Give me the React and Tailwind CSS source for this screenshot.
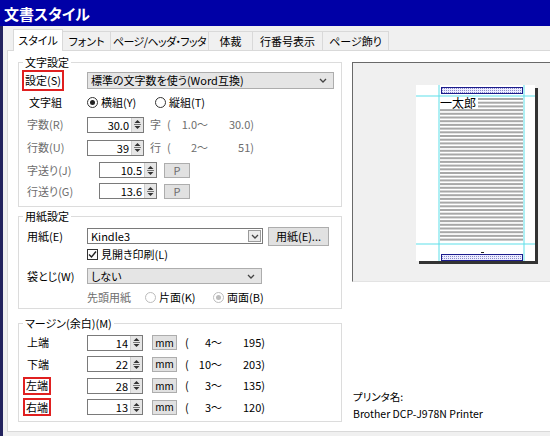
import React from "react";

// 小さな上下矢印（スピンボタン）
const SpinArrows = () => (
  <svg width="7" height="11" viewBox="0 0 7 11">
    <polygon points="3.5,1 6.5,4 0.5,4" fill="#333" />
    <rect x="0" y="5" width="7" height="1" fill="#777" />
    <polygon points="0.5,7 6.5,7 3.5,10" fill="#333" />
  </svg>
);

const Spin = ({ value, w }) => (
  <div className={`${w} h-[16px] flex border border-[#7a7a7a] bg-white`}>
    <div className="flex-1 text-right pr-[2px] leading-[14px]">{value}</div>
    <div className="w-[12px] bg-[#e6e6e6] border-l border-[#cfcfcf] flex items-center justify-center">
      <SpinArrows />
    </div>
  </div>
);

const Chevron = () => (
  <svg width="8" height="5" viewBox="0 0 8 5">
    <polyline points="1,1 4,4 7,1" fill="none" stroke="#444" strokeWidth="1.3" />
  </svg>
);

const Radio = ({ checked, disabled }) => (
  <span
    className={`w-[11px] h-[11px] rounded-full border bg-white flex items-center justify-center ${
      disabled ? "border-[#bcbcbc]" : "border-[#333] border-[1.5px]"
    }`}
  >
    {checked && (
      <span
        className={`w-[5px] h-[5px] rounded-full ${
          disabled ? "bg-[#bcbcbc]" : "bg-[#222]"
        }`}
      />
    )}
  </span>
);

const GrayBtn = ({ children, w, h }) => (
  <div
    className={`${w} ${h} bg-[#e1e1e1] border border-[#adadad] flex items-center justify-center leading-none`}
  >
    {children}
  </div>
);

const tabs = [
  { name: "スタイル", w: "w-[50px]", active: true },
  { name: "フォント", w: "w-[48px]" },
  { name: "ページ/ヘッダ・フッタ", w: "w-[98px]", tight: true },
  { name: "体裁", w: "w-[44px]" },
  { name: "行番号表示", w: "w-[70px]" },
  { name: "ページ飾り", w: "w-[66px]" },
];

const margins = [
  { label: "上端", value: "14", min: "4〜", max: "195)", h: "h-[21px]" },
  { label: "下端", value: "22", min: "10〜", max: "203)", h: "h-[22px]" },
  { label: "左端", value: "28", min: "3〜", max: "135)", h: "h-[21px]", red: true },
  { label: "右端", value: "13", min: "3〜", max: "120)", h: "h-[22px]", red: true },
];

// プレビューのページ
const PagePreview = () => {
  const lines = Array.from({ length: 39 }, (_, i) => 14 + i * 3.7);
  return (
    <svg width="126" height="182" viewBox="0 0 126 182">
      <defs>
        <pattern id="dots" width="2" height="2" patternUnits="userSpaceOnUse">
          <rect width="2" height="2" fill="#ececff" />
          <rect width="1" height="1" fill="#8a8ac8" />
        </pattern>
      </defs>
      <rect x="2" y="1" width="119" height="176" fill="#fff" />
      <rect x="121" y="4" width="3" height="176" fill="#333" />
      <rect x="5" y="177" width="119" height="3" fill="#333" />
      {lines.map((y, i) => (
        <rect
          key={i}
          x={y < 24 ? 64 : 26}
          y={y}
          width={y < 24 ? 45 : 83}
          height="2"
          fill="#a8a8a8"
        />
      ))}
      <text x="26" y="24" fontSize="12" fill="#000" fontFamily="Noto Sans CJK JP">
        一太郎
      </text>
      <rect x="2" y="11.5" width="119" height="1" fill="#5fe0ea" />
      <rect x="2" y="159.5" width="119" height="1" fill="#5fe0ea" />
      <rect x="24.5" y="1" width="1" height="176" fill="#5fe0ea" />
      <rect x="109.5" y="1" width="1" height="176" fill="#5fe0ea" />
      <rect x="27.5" y="3.5" width="81" height="6" fill="url(#dots)" stroke="#1c1c8c" strokeWidth="1" />
      <rect x="27.5" y="170.5" width="81" height="6" fill="url(#dots)" stroke="#1c1c8c" strokeWidth="1" />
      <rect x="67" y="168" width="3" height="1" fill="#222" />
    </svg>
  );
};

const App = () => {
  return (
    <div className="w-[550px] h-[436px] overflow-hidden bg-[#f0f0f0] font-['Noto_Sans_CJK_JP',sans-serif] [font-feature-settings:'palt'] text-[11px] text-black">
      <div className="h-[26px] bg-[#0000a6] text-white font-bold text-[15px] pl-[4px] flex items-center leading-none">
        文書スタイル
      </div>
      <div className="h-[410px] border-l-[3px] border-[#23235e] pl-[4px] pt-[3px]">
        {/* タブ */}
        <div className="flex items-end pl-[6px]">
          {tabs.map((t) =>
            t.active ? (
              <div
                key={t.name}
                className={`${t.w} h-[22px] -mb-px relative z-10 bg-white border border-b-0 border-[#d9d9d9] flex items-center justify-center whitespace-nowrap`}
              >
                {t.name}
              </div>
            ) : (
              <div
                key={t.name}
                className={`${t.w} h-[19px] bg-[#f0f0f0] border border-l-0 border-b-0 border-[#d9d9d9] flex items-center justify-center whitespace-nowrap ${
                  t.tight ? "tracking-[-0.6px]" : ""
                }`}
              >
                {t.name}
              </div>
            )
          )}
        </div>

        {/* タブの中身 */}
        <div className="w-[560px] h-[382px] bg-white border border-[#d9d9d9] flex pl-[10px]">
          <div className="w-[324px] flex flex-col pt-[4px]">
            {/* 文字設定 */}
            <fieldset className="border border-[#dcdcdc] pb-[5px]">
              <legend className="ml-[4px] px-[2px] leading-[14px]">文字設定</legend>
              <div className="flex items-center h-[22px] pl-[6px]">
                <div className="w-[62px]">
                  <span className="-ml-[3px] h-[21px] px-[1px] border-2 border-[#e02020] inline-flex items-center">
                    設定(S)
                  </span>
                </div>
                <div className="w-[247px] h-[17px] bg-[#e5e5e5] border border-[#adadad] flex items-center justify-between pl-[3px] pr-[6px]">
                  <span>標準の文字数を使う(Word互換)</span>
                  <Chevron />
                </div>
              </div>
              <div className="flex items-center h-[22px] pl-[6px]">
                <div className="w-[62px] pl-[4px]">文字組</div>
                <div className="w-[68px] flex items-center gap-[3px]">
                  <Radio checked />
                  <span>横組(Y)</span>
                </div>
                <div className="flex items-center gap-[3px]">
                  <Radio />
                  <span>縦組(T)</span>
                </div>
              </div>
              <div className="flex items-center h-[23px] pl-[6px] text-[#6d6d6d]">
                <div className="w-[62px] pl-[2px]">字数(R)</div>
                <div className="text-black">
                  <Spin value="30.0" w="w-[57px]" />
                </div>
                <span className="w-[6px]" />
                <span className="w-[17px]">字</span>
                <span className="w-[14px]">(</span>
                <span className="w-[27px] text-right">1.0〜</span>
                <span className="w-[46px] text-right">30.0)</span>
              </div>
              <div className="flex items-center h-[23px] pl-[6px] text-[#6d6d6d]">
                <div className="w-[62px] pl-[2px]">行数(U)</div>
                <div className="text-black">
                  <Spin value="39" w="w-[57px]" />
                </div>
                <span className="w-[6px]" />
                <span className="w-[17px]">行</span>
                <span className="w-[14px]">(</span>
                <span className="w-[27px] text-right">2〜</span>
                <span className="w-[46px] text-right">51)</span>
              </div>
              <div className="flex items-center h-[22px] pl-[6px] text-[#6d6d6d]">
                <div className="w-[62px] pl-[2px]">字送り(J)</div>
                <div className="ml-[12px] text-black">
                  <Spin value="10.5" w="w-[58px]" />
                </div>
                <div className="ml-[7px]">
                  <GrayBtn w="w-[26px]" h="h-[15px]">P</GrayBtn>
                </div>
              </div>
              <div className="flex items-center h-[20px] pl-[6px] text-[#6d6d6d]">
                <div className="w-[62px] pl-[2px]">行送り(G)</div>
                <div className="ml-[12px] text-black">
                  <Spin value="13.6" w="w-[58px]" />
                </div>
                <div className="ml-[7px]">
                  <GrayBtn w="w-[26px]" h="h-[15px]">P</GrayBtn>
                </div>
              </div>
            </fieldset>

            {/* 用紙設定 */}
            <fieldset className="mt-[2px] border border-[#dcdcdc] pt-[2px] pb-[1px]">
              <legend className="ml-[4px] px-[2px] leading-[14px]">用紙設定</legend>
              <div className="flex items-center h-[22px] pl-[6px]">
                <div className="w-[62px] pl-[2px]">用紙(E)</div>
                <div className="w-[176px] h-[16px] bg-white border border-[#7a7a7a] flex items-center justify-between pl-[3px] pr-[1px]">
                  <span>Kindle3</span>
                  <span className="w-[13px] h-[12px] border border-[#9a9a9a] bg-[#ececec] flex items-center justify-center">
                    <Chevron />
                  </span>
                </div>
                <div className="ml-[5px]">
                  <GrayBtn w="w-[61px]" h="h-[19px]">用紙(E)...</GrayBtn>
                </div>
              </div>
              <div className="flex items-center h-[14px] pl-[68px] gap-[3px]">
                <span className="w-[11px] h-[11px] border border-[#333] bg-white flex items-center justify-center">
                  <svg width="9" height="9" viewBox="0 0 9 9">
                    <polyline points="1,4.5 3.5,7 8,1.5" fill="none" stroke="#222" strokeWidth="1.4" />
                  </svg>
                </span>
                <span>見開き印刷(L)</span>
              </div>
              <div className="flex items-center h-[22px] mt-[4px] pl-[6px]">
                <div className="w-[62px] pl-[2px]">袋とじ(W)</div>
                <div className="w-[175px] h-[16px] bg-[#e5e5e5] border border-[#adadad] flex items-center justify-between pl-[3px] pr-[6px]">
                  <span>しない</span>
                  <Chevron />
                </div>
              </div>
              <div className="flex items-center h-[20px] pl-[68px]">
                <div className="w-[58px] text-[#6d6d6d]">先頭用紙</div>
                <div className="w-[68px] flex items-center gap-[3px]">
                  <Radio disabled />
                  <span>片面(K)</span>
                </div>
                <div className="flex items-center gap-[3px]">
                  <Radio checked disabled />
                  <span>両面(B)</span>
                </div>
              </div>
            </fieldset>

            {/* マージン */}
            <fieldset className="mt-[7px] border border-[#dcdcdc] pt-[2px] pb-[3px]">
              <legend className="ml-[4px] px-[2px] leading-[14px]">マージン(余白)(M)</legend>
              {margins.map((m) => (
                <div key={m.label} className={`flex items-center ${m.h} pl-[6px]`}>
                  <div className="w-[62px]">
                    {m.red ? (
                      <span className="-ml-[2px] h-[18px] px-[1px] border-2 border-[#e02020] inline-flex items-center">
                        {m.label}
                      </span>
                    ) : (
                      <span className="pl-[2px]">{m.label}</span>
                    )}
                  </div>
                  <Spin value={m.value} w="w-[56px]" />
                  <div className="ml-[9px]">
                    <GrayBtn w="w-[25px]" h="h-[15px]">
                      <span className="text-[10px]">mm</span>
                    </GrayBtn>
                  </div>
                  <span className="ml-[8px] w-[7px]">(</span>
                  <span className="w-[30px] text-right">{m.min}</span>
                  <span className="w-[43px] text-right">{m.max}</span>
                </div>
              ))}
            </fieldset>
          </div>

          {/* プレビュー */}
          <div className="flex-1 flex flex-col pt-[11px] ml-[10px]">
            <div className="h-[220px] bg-[#f0f0f0] border-t border-l border-[#696969] border-b-[#e3e3e3] border-b pl-[61px] pt-[21px]">
              <PagePreview />
            </div>
            <div className="mt-[108px] ml-[1px] leading-[14px] text-[10.5px]">プリンタ名:</div>
            <div className="mt-[3px] ml-[1px] leading-[14px] text-[10.5px]">
              Brother DCP-J978N Printer
            </div>
          </div>
        </div>
      </div>
    </div>
  );
};

export default App;
